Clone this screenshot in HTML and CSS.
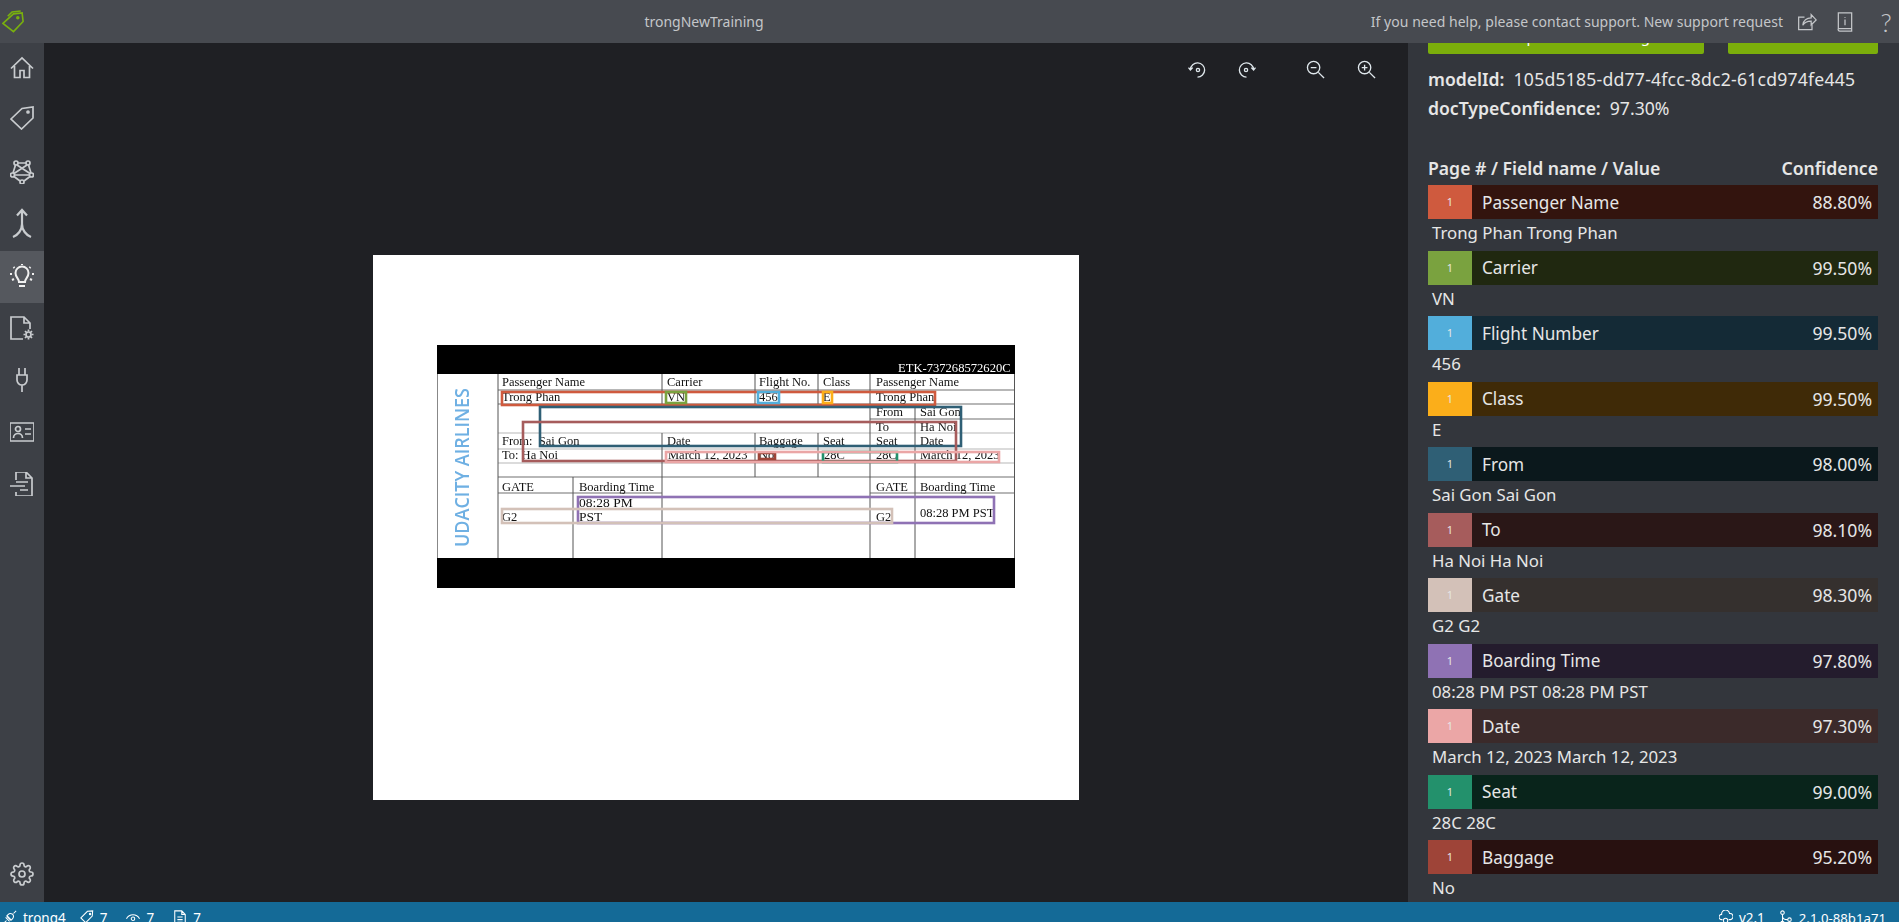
FILE: index.html
```html
<!DOCTYPE html>
<html lang="en">
<head>
<meta charset="UTF-8">
<title>trongNewTraining</title>
<link rel="stylesheet" href="styles.css">
</head>
<body>
<div class="app">

  <div class="titlebar">
    <svg class="logo" viewBox="0 0 24 24"><path d="M1 14 12 4l9-1 1 9-10 10.500z"/><path d="M6 6.500 10.500 2l9-1"/><circle cx="16.500" cy="8" r="1"/></svg>
    <div class="title">trongNewTraining</div>
    <div class="help">If you need help, please contact support. New support request</div>
    <svg class="bar-icon share" viewBox="0 0 24 24"><path d="M9 6H2v15h16v-6"/><path d="M7 16c0-6 5-9 10-9V3l6 6.500-6 6V11c-4 0-8 1-10 5z"/></svg>
    <svg class="bar-icon book" viewBox="0 0 24 24"><path d="M4 20V1h16v22H6a2 2 0 0 1-2-3h16"/><path d="M12 6v1M12 9v7"/></svg>
    <div class="question">?</div>
  </div>

  <div class="main">
    <div class="sidebar">
      <div class="nav-item"><svg viewBox="0 0 24 24"><path d="M1 12.500 12 2l11 10.500M4.500 10v11.500h5.500v-7h4v7h5.500V10"/></svg></div>
      <div class="nav-item nav-tag"><svg viewBox="0 0 24 24"><path d="M1 13 12 2.500 23 1v11L11.500 23z"/><circle cx="18" cy="6" r="1"/></svg></div>
      <div class="nav-item"><svg viewBox="0 0 24 24"><circle cx="6" cy="3" r="2"/><circle cx="18" cy="3" r="2"/><circle cx="2.500" cy="15" r="2"/><circle cx="21.500" cy="15" r="2"/><circle cx="12" cy="22" r="2"/><path d="M8 3h8M7 5l13 8.500M17 5 4 13.500M5.500 5 3 13M18.500 5 21 13M4 16.500l6 4.500M20 16.500 14 21M4.500 15h15"/></svg></div>
      <div class="nav-item"><svg class="tall" viewBox="0 0 24 32"><path d="M12 2v14c0 6-4 11-9 13M12 16c0 6 4 11 9 13M7 7.500 12 2l5 5.500"/></svg></div>
      <div class="nav-item active"><svg viewBox="0 0 24 24"><path d="M9 18c0-3.500-3.500-4.500-3.500-9a6.500 6.500 0 0 1 13 0c0 4.500-3.500 5.500-3.500 9zM9 22h6M12 0v1M3.500 3l1 1M20.500 3l-1 1M0 10h2M22 10h2M2 16l2-1M22 16l-2-1"/></svg></div>
      <div class="nav-item"><svg viewBox="0 0 24 24"><path d="M13 23H1V1h13l6 6v6M14 1v6h6"/><circle cx="18.500" cy="18.500" r="2.500"/><path d="M18.500 13.500v2M18.500 21.500v2M13.500 18.500h2M21.500 18.500h2M15 15l1.500 1.500M20.500 20.500 22 22M22 15l-1.500 1.500M16.500 20.500 15 22"/></svg></div>
      <div class="nav-item"><svg viewBox="0 0 24 24"><path d="M9 0v7M15 0v7M7 7h10v5a5 5 0 0 1-10 0zM12 17v7"/></svg></div>
      <div class="nav-item"><svg viewBox="0 0 24 24"><path d="M0 3h24v18H0z"/><circle cx="8" cy="9" r="2.500"/><path d="M3.500 18c0-6 9-6 9 0M15 9h6M15 14h6"/></svg></div>
      <div class="nav-item"><svg viewBox="0 0 24 24"><path d="M6 8V0h10l6 6v18H6v-4M16 0v6h6M0 14h15M6 10h12M10 18h8"/></svg></div>
      <div class="nav-spacer"></div>
      <div class="nav-item settings"><svg viewBox="0 0 24 24"><circle cx="12" cy="12" r="3"/><path d="M19.400 15a1.650 1.650 0 0 0 .33 1.820l.06.06a2 2 0 0 1 0 2.830 2 2 0 0 1-2.830 0l-.06-.06a1.650 1.650 0 0 0-1.820-.33 1.650 1.650 0 0 0-1 1.510V21a2 2 0 0 1-2 2 2 2 0 0 1-2-2v-.09A1.650 1.650 0 0 0 9 19.400a1.650 1.650 0 0 0-1.820.33l-.06.06a2 2 0 0 1-2.830 0 2 2 0 0 1 0-2.830l.06-.06a1.650 1.650 0 0 0 .33-1.820 1.650 1.650 0 0 0-1.510-1H3a2 2 0 0 1-2-2 2 2 0 0 1 2-2h.09A1.650 1.650 0 0 0 4.600 9a1.650 1.650 0 0 0-.33-1.820l-.06-.06a2 2 0 0 1 0-2.830 2 2 0 0 1 2.830 0l.06.06a1.650 1.650 0 0 0 1.820.33H9a1.650 1.650 0 0 0 1-1.510V3a2 2 0 0 1 2-2 2 2 0 0 1 2 2v.09a1.650 1.650 0 0 0 1 1.510 1.650 1.650 0 0 0 1.820-.33l.06-.06a2 2 0 0 1 2.830 0 2 2 0 0 1 0 2.830l-.06.06a1.650 1.650 0 0 0-.33 1.820V9a1.650 1.650 0 0 0 1.510 1H21a2 2 0 0 1 2 2 2 2 0 0 1-2 2h-.09a1.650 1.650 0 0 0-1.510 1z"/></svg></div>
    </div>

    <div class="canvas">
      <div class="tools">
        <svg class="tool" viewBox="0 0 20 20"><path d="M2.500 10a7.500 7.500 0 1 1 7.500 8M.5 8l2 2.500L5 8"/><circle cx="10.500" cy="10.500" r="1.700"/></svg>
        <svg class="tool tool-right" viewBox="0 0 20 20"><path d="M17.500 10A7.500 7.500 0 1 0 10 18M19.500 8l-2 2.500L15 8"/><circle cx="9.500" cy="10.500" r="1.700"/></svg>
        <svg class="tool tool-zoom" viewBox="0 0 20 20"><circle cx="8" cy="8" r="6.500"/><path d="m13 13 6 6M5 8h6"/></svg>
        <svg class="tool" viewBox="0 0 20 20"><circle cx="8" cy="8" r="6.500"/><path d="m13 13 6 6M5 8h6M8 5v6"/></svg>
      </div>
      <div class="page">
        <svg class="ticket" viewBox="0 0 578 243" width="578" height="243">
          <rect x=".5" y=".5" width="577" height="242" fill="#fff" stroke="#888"/>
          <rect width="578" height="29" fill="#000"/>
          <rect y="213" width="578" height="30" fill="#000"/>
          <g class="rule">
            <path d="M61 45h517M61 59h517M433 74h145M61 132h517M61 148h164M433 148h145"/>
          </g>
          <g class="rule-light">
            <path d="M61 88h517M61 104h517M61 118h517"/>
          </g>
          <g class="rule-dark">
            <path d="M61 29v184M136 132v81M225 29v30M225 88v125M318 29v30M318 88v44M381 29v30M381 88v44M433 29v184M478 59v154M577.500 29v184"/>
          </g>
          <text class="etk" x="461" y="27">ETK-737268572620C</text>
          <text class="brand" transform="translate(32 202) rotate(-90)" textLength="159" lengthAdjust="spacingAndGlyphs">UDACITY AIRLINES</text>
          <g class="cell">
            <text x="65" y="41">Passenger Name</text><text x="230" y="41">Carrier</text><text x="322" y="41">Flight No.</text><text x="386" y="41">Class</text><text x="439" y="41">Passenger Name</text>
            <text x="65" y="56">Trong Phan</text><text x="230" y="56">VN</text><text x="322" y="56">456</text><text x="386" y="56">E</text><text x="439" y="56">Trong Phan</text>
            <text x="439" y="71">From</text><text x="483" y="71">Sai Gon</text>
            <text x="439" y="86">To</text><text x="483" y="86">Ha Noi</text>
            <text x="65" y="100">From:&#160;&#160;Sai Gon</text><text x="230" y="100">Date</text><text x="322" y="100">Baggage</text><text x="386" y="100">Seat</text><text x="439" y="100">Seat</text><text x="483" y="100">Date</text>
            <text x="65" y="114">To: Ha Noi</text><text x="231" y="114">March 12, 2023</text><text x="322" y="114">No</text><text x="387" y="114">28C</text><text x="439" y="114">28C</text><text x="483" y="114">March 12, 2023</text>
            <text x="65" y="146">GATE</text><text x="142" y="146">Boarding Time</text><text x="439" y="146">GATE</text><text x="483" y="146">Boarding Time</text>
            <text class="cell-big" x="142" y="162">08:28 PM</text><text class="cell-big" x="142" y="176">PST</text>
            <text x="65" y="176">G2</text><text x="439" y="176">G2</text><text x="483" y="172">08:28 PM PST</text>
          </g>
          <g class="box">
            <rect x="65" y="47" width="433" height="13" stroke="#cf5a3e"/>
            <rect x="229" y="47" width="20" height="11" stroke="#7aa23f"/>
            <rect x="321" y="47" width="21" height="11" stroke="#52aedb"/>
            <rect x="386" y="47" width="9" height="11" stroke="#fbae1a"/>
            <rect x="103" y="62" width="421" height="39" stroke="#2f5f75"/>
            <rect x="86" y="77" width="433" height="39" stroke="#a65c5c"/>
            <rect x="386" y="107" width="74" height="10" stroke="#23916c"/>
            <rect x="322" y="108" width="16" height="6" stroke="#9e4438"/>
            <rect x="229" y="107" width="333" height="10" stroke="#eba6a6"/>
            <rect x="141" y="152" width="416" height="26" stroke="#8f72b4"/>
            <rect x="65" y="164" width="390" height="14" stroke="#d3c1b8"/>
          </g>
        </svg>
      </div>
    </div>

    <div class="pane">
      <div class="actions">
        <div class="btn btn-wide">New upload for training</div>
        <div class="btn btn-small">Download</div>
      </div>
      <div class="meta"><b>modelId:</b>&nbsp; <span class="meta-id">105d5185-dd77-4fcc-8dc2-61cd974fe445</span></div>
      <div class="meta"><b>docTypeConfidence:</b>&nbsp; 97.30%</div>
      <div class="head"><span>Page # / Field name / Value</span><span>Confidence</span></div>

      <div class="field f-passenger"><div class="chip">1</div><div class="name">Passenger Name</div><div class="pct">88.80%</div></div>
      <div class="value">Trong Phan Trong Phan</div>
      <div class="field f-carrier"><div class="chip">1</div><div class="name">Carrier</div><div class="pct">99.50%</div></div>
      <div class="value">VN</div>
      <div class="field f-flight"><div class="chip">1</div><div class="name">Flight Number</div><div class="pct">99.50%</div></div>
      <div class="value">456</div>
      <div class="field f-class"><div class="chip">1</div><div class="name">Class</div><div class="pct">99.50%</div></div>
      <div class="value">E</div>
      <div class="field f-from"><div class="chip">1</div><div class="name">From</div><div class="pct">98.00%</div></div>
      <div class="value">Sai Gon Sai Gon</div>
      <div class="field f-to"><div class="chip">1</div><div class="name">To</div><div class="pct">98.10%</div></div>
      <div class="value">Ha Noi Ha Noi</div>
      <div class="field f-gate"><div class="chip">1</div><div class="name">Gate</div><div class="pct">98.30%</div></div>
      <div class="value">G2 G2</div>
      <div class="field f-boarding"><div class="chip">1</div><div class="name">Boarding Time</div><div class="pct">97.80%</div></div>
      <div class="value">08:28 PM PST 08:28 PM PST</div>
      <div class="field f-date"><div class="chip">1</div><div class="name">Date</div><div class="pct">97.30%</div></div>
      <div class="value">March 12, 2023 March 12, 2023</div>
      <div class="field f-seat"><div class="chip">1</div><div class="name">Seat</div><div class="pct">99.00%</div></div>
      <div class="value">28C 28C</div>
      <div class="field f-baggage"><div class="chip">1</div><div class="name">Baggage</div><div class="pct">95.20%</div></div>
      <div class="value">No</div>
    </div>
  </div>

  <div class="statusbar">
    <svg class="st-icon st-first" viewBox="0 0 16 16"><path d="m1 15 3-3M15 1l-3 3M4 7l5 5M5.500 5.500c2-2 3-2 5-1l1 1c1 2 1 3-1 5l-1 1-5-5zM3 8.500l4.500 4.500"/></svg>
    <span class="st-text">trong4</span>
    <svg class="st-icon st-gap" viewBox="0 0 16 16"><path d="M1 9 8.500 1.500l6-.5-.5 6L6.500 14.500z"/><circle cx="11.500" cy="4.500" r=".8"/></svg>
    <span class="st-text">7</span>
    <svg class="st-icon st-gap-eye" viewBox="0 0 16 16"><path d="M.5 10C4 4 12 4 15.500 10"/><circle cx="8" cy="10" r="2"/></svg>
    <span class="st-text">7</span>
    <svg class="st-icon st-gap-eye" viewBox="0 0 16 16"><path d="M2 1h8l4 4v11H2zM10 1v4h4M5 8h6M5 11h6M5 14h6"/></svg>
    <span class="st-text">7</span>
    <div class="st-spacer"></div>
    <svg class="st-icon" viewBox="0 0 16 16"><path d="M4 11H3a3 3 0 0 1 0-6 4.500 4.500 0 0 1 9-1 3.500 3.500 0 0 1 1 7h-2"/><circle cx="7.500" cy="12" r="2.500"/></svg>
    <span class="st-text">v2.1</span>
    <svg class="st-icon st-gap-branch" viewBox="0 0 16 16"><circle cx="4" cy="3" r="2"/><circle cx="4" cy="15" r="2"/><circle cx="12" cy="11" r="2"/><path d="M4 5v8M4 7c0 3 3 4 6 4"/></svg>
    <span class="st-text st-build">2.1.0-88b1a71</span>
  </div>

</div>
</body>
</html>
```

FILE: styles.css
```css
* {
  box-sizing: border-box;
}
html, body {
  margin: 0;
  padding: 0;
  height: 100%;
  overflow: hidden;
}
body {
  font-family: "Noto Sans", "Open Sans", Arial, sans-serif;
  color: #e6e6e6;
  background-color: #1f2024;
}
.app {
  display: flex;
  flex-direction: column;
  height: 100vh;
}

/* title bar */
.titlebar {
  position: relative;
  z-index: 2;
  display: flex;
  align-items: center;
  flex: none;
  height: 43px;
  background-color: #474a50;
  padding-left: 2px;
  font-size: 14px;
  color: #c4c6c9;
}
.logo {
  width: 23px;
  height: 23px;
  fill: none;
  stroke: #79b00e;
  stroke-width: 1.7;
}
.title {
  position: absolute;
  left: 644px;
  width: 120px;
  text-align: center;
  white-space: nowrap;
}
.help {
  margin-left: auto;
  white-space: nowrap;
  letter-spacing: 0.03px;
}
.bar-icon {
  width: 20px;
  height: 20px;
  fill: none;
  stroke: #c4c6c9;
  stroke-width: 1.5;
}
.share {
  margin-left: 14px;
}
.book {
  margin-left: 18px;
}
.question {
  width: 22px;
  margin-left: 20px;
  margin-right: 2px;
  font-family: Lato, "Noto Sans", sans-serif;
  font-size: 26px;
  font-weight: 300;
  text-align: center;
}

.main {
  display: flex;
  flex: 1;
  min-height: 0;
}

/* left nav */
.sidebar {
  display: flex;
  flex-direction: column;
  flex: none;
  width: 44px;
  background-color: #3d4046;
}
.nav-item {
  display: flex;
  align-items: center;
  justify-content: center;
  flex: none;
  height: 52px;
  padding-bottom: 3px;
}
.nav-tag {
  padding-bottom: 6px;
}
.nav-item svg {
  width: 24px;
  height: 24px;
  fill: none;
  stroke: #c9cccf;
  stroke-width: 1.7;
}
.nav-item svg.tall {
  height: 32px;
  stroke-width: 2.2;
}
.nav-item.active {
  padding-bottom: 2px;
  background-color: #55585e;
}
.nav-item.active svg {
  stroke: #f0f0f0;
  stroke-width: 2;
}
.nav-spacer {
  flex: 1;
}
.settings {
  margin-bottom: 2px;
  padding-bottom: 0;
}

/* document canvas */
.canvas {
  flex: 1;
  min-width: 0;
  background-color: #1f2024;
}
.tools {
  display: flex;
  justify-content: flex-end;
  height: 54px;
  padding: 17px 32px 0 0;
}
.tool {
  width: 19px;
  height: 19px;
  fill: none;
  stroke: #dfe7ec;
  stroke-width: 1.4;
}
.tool-right {
  margin-left: 30px;
}
.tool-zoom {
  margin-left: 50px;
  margin-right: 32px;
}
.page {
  display: flex;
  justify-content: center;
  width: 706px;
  height: 545px;
  margin: 158px auto 0;
  padding-top: 90px;
  background-color: #fff;
}
.ticket {
  display: block;
  filter: blur(0.6px);
}
.rule path {
  fill: none;
  stroke: #a0a0a0;
  stroke-width: 1.6;
}
.rule-light path {
  fill: none;
  stroke: #cfcfcf;
  stroke-width: 1.5;
}
.rule-dark path {
  fill: none;
  stroke: #555;
}
.etk {
  font-family: "Liberation Serif", serif;
  font-size: 12.6px;
  fill: #fff;
}
.brand {
  font-family: "Open Sans", sans-serif;
  font-size: 20px;
  font-weight: 600;
  fill: #6fb0e3;
}
.cell text {
  font-family: "Liberation Serif", serif;
  font-size: 12.5px;
  fill: #111;
}
.cell .cell-big {
  font-size: 13.5px;
}
.box rect {
  fill: none;
  stroke-width: 2.6;
}

/* right pane */
.pane {
  flex: none;
  width: 491px;
  padding: 0 21px 0 20px;
  background-color: #33363c;
  overflow: hidden;
}
.actions {
  display: flex;
  justify-content: space-between;
  margin-top: -21px;
  margin-bottom: 11px;
}
.btn {
  height: 32px;
  border-radius: 2px;
  background-color: #7bae0b;
  color: #fff;
  font-size: 15px;
  line-height: 28px;
  text-align: center;
}
.btn-wide {
  width: 276px;
}
.btn-small {
  width: 150px;
}
.meta {
  height: 29px;
  font-size: 17.6px;
  line-height: 29px;
  white-space: nowrap;
}
.meta b {
  font-weight: 600;
}
.meta-id {
  letter-spacing: 0.22px;
}
.head {
  display: flex;
  justify-content: space-between;
  height: 30px;
  margin-top: 32px;
  font-size: 17.6px;
  font-weight: 600;
  line-height: 26px;
}
.field {
  display: flex;
  align-items: center;
  height: 34px;
  font-size: 17.2px;
  background-color: var(--dim);
}
.chip {
  width: 44px;
  height: 34px;
  margin-right: 10px;
  font-size: 11px;
  line-height: 34px;
  text-align: center;
  background-color: var(--full);
}
.pct {
  margin-left: auto;
  padding-right: 6px;
  font-size: 17.6px;
}
.value {
  height: 31.5px;
  padding-left: 4px;
  font-size: 16.8px;
  line-height: 28px;
  white-space: nowrap;
}
.f-passenger { --full: #cf5a3e; --dim: #33140e; }
.f-carrier { --full: #7aa23f; --dim: #202810; }
.f-flight { --full: #52aedb; --dim: #142a36; }
.f-class { --full: #fbae1a; --dim: #3f2a07; }
.f-from { --full: #2f5f75; --dim: #0b181c; }
.f-to { --full: #a65c5c; --dim: #2a1717; }
.f-gate { --full: #d3c1b8; --dim: #35302e; }
.f-boarding { --full: #8f72b4; --dim: #241c2d; }
.f-date { --full: #eba6a6; --dim: #3b2a2a; }
.f-seat { --full: #23916c; --dim: #09241b; }
.f-baggage { --full: #9e4438; --dim: #281110; }

/* status bar */
.statusbar {
  position: relative;
  z-index: 2;
  display: flex;
  flex: none;
  align-items: flex-start;
  height: 20px;
  overflow: hidden;
  padding: 6px 13px 0 3px;
  background-color: #146a97;
  color: #fff;
  font-size: 13.5px;
  line-height: 20px;
}
.st-icon {
  flex: none;
  width: 14px;
  height: 14px;
  margin-top: 2px;
  fill: none;
  stroke: #fff;
  stroke-width: 1.2;
}
.st-text {
  margin-left: 6px;
  white-space: nowrap;
}
.st-gap {
  margin-left: 14px;
}
.st-gap-eye {
  margin-left: 19px;
}
.st-gap-branch {
  margin-left: 14px;
}
.st-build {
  font-size: 13.2px;
}
.st-spacer {
  flex: 1;
}
```
